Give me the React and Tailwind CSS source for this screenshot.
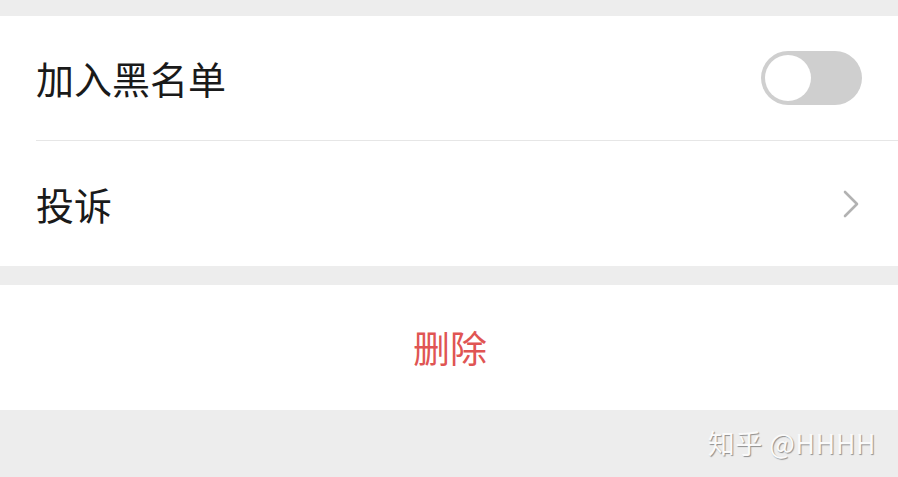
import React from "react";

function Toggle() {
    return (
        <div className="w-[101px] h-[54px] rounded-full bg-[#cfcfcf] p-[4px] flex items-center">
            <div className="w-[46px] h-[46px] rounded-full bg-white" />
        </div>
    )
}

function Chevron() {
    return (
        <svg width="18" height="30" viewBox="0 0 18 30" fill="none">
            <path d="M3 3 L15 15 L3 27" stroke="#b2b2b2" strokeWidth="2.6" strokeLinecap="round" strokeLinejoin="round" />
        </svg>
    )
}

export default function App() {
    const font = { fontFamily: '"Noto Sans CJK SC", "Noto Sans", sans-serif' }
    return (
        <div className="w-[898px] h-[477px] bg-[#ededed] overflow-hidden flex flex-col" style={font}>
            <div className="h-[16px]" />
            <div className="bg-white">
                <div className="h-[124px] flex items-center justify-between pl-[36px] pr-[36px]">
                    <span className="text-[38px] text-[#1a1a1a] leading-none">加入黑名单</span>
                    <Toggle />
                </div>
                <div className="ml-[36px] h-px bg-[#e6e6e6]" />
                <div className="h-[125px] flex items-center justify-between pl-[36px] pr-[38px]">
                    <span className="text-[38px] text-[#1a1a1a] leading-none">投诉</span>
                    <Chevron />
                </div>
            </div>
            <div className="h-[19px]" />
            <div className="bg-white h-[125px] flex items-center justify-center">
                <span className="text-[37px] text-[#e05553] leading-none pl-[2px]">删除</span>
            </div>
            <div className="flex-1 flex justify-end items-start pt-[19px] pr-[22px]">
                <span className="text-[27px] text-[#fafafa] leading-none tracking-[0.5px] [text-shadow:1px_1px_1px_rgba(0,0,0,0.4)]">知乎 @HHHH</span>
            </div>
        </div>
    )
}
